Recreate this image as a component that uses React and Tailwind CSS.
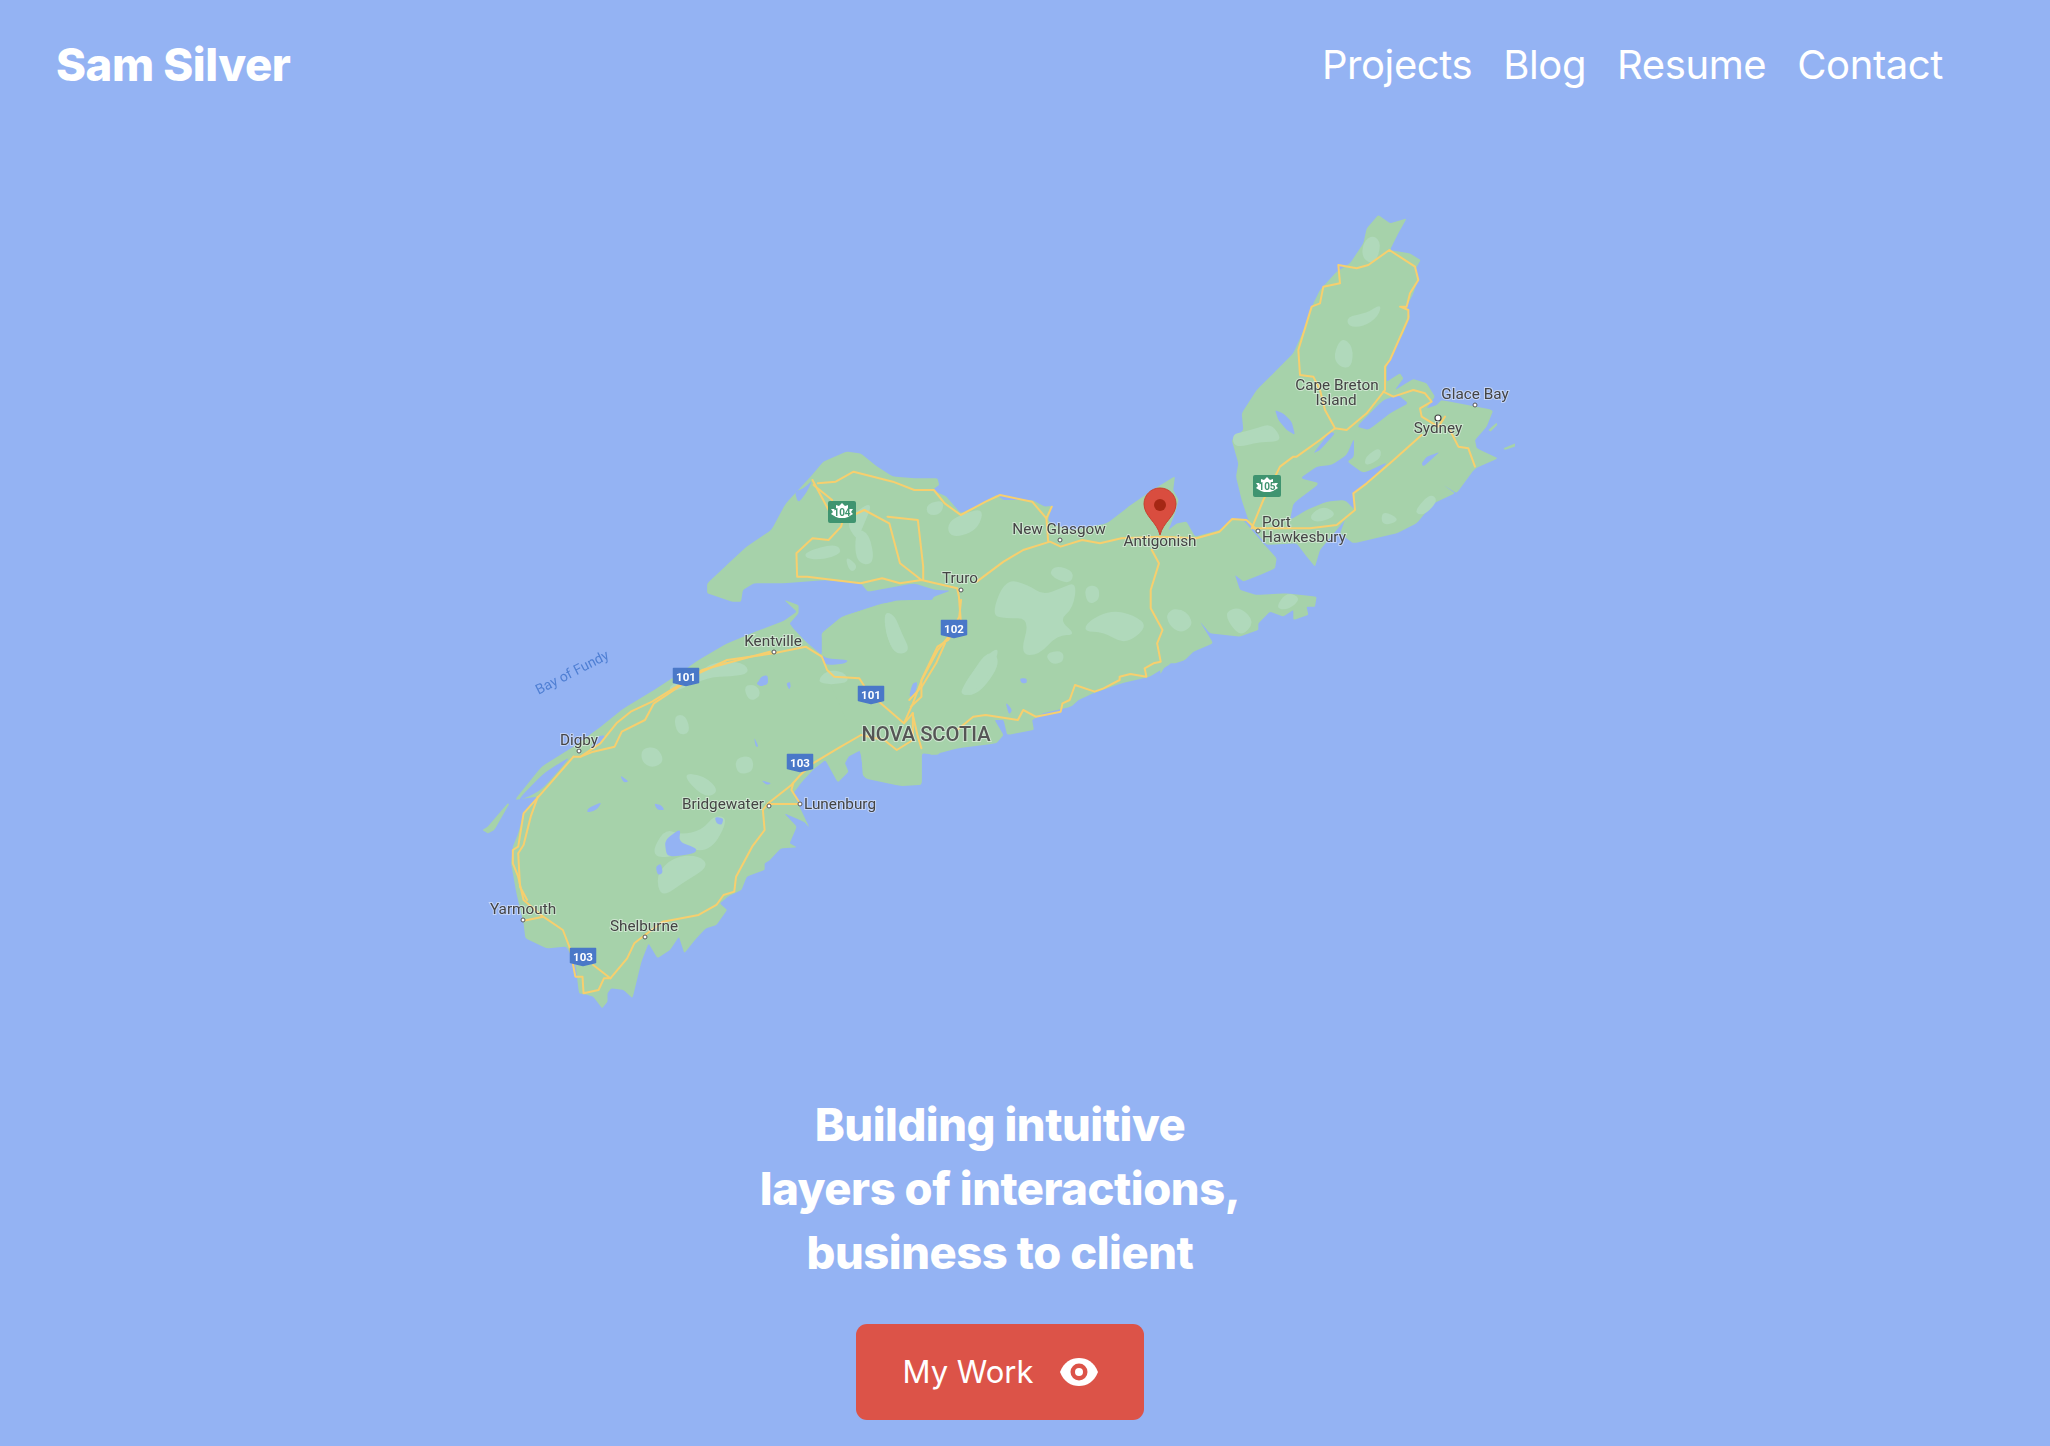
const LAND = '#a6d2aa';
const LIGHT = '#b0d9bb';
const WATER = '#94b3f3';
const ROAD = '#f7cf6e';

// each group is traced in its own local coords, then scaled onto the page
const SW = 'translate(470 600) scale(0.35714 0.33333)';
const MID = 'translate(700 420) scale(0.35714 0.33333)';
const NE = 'translate(1150 200) scale(0.33333)';
const SE = 'translate(1160 500) scale(0.33333)';

const swLand = [
  '125,600 200,500 290,440 360,385 430,325 515,270 580,225 640,180 720,130 800,95 880,62 915,35 880,0 920,15 920,40 895,70 905,85 940,125 985,165 985,100 1040,50 1130,20 1200,0 1568,0 1568,330 1520,350 1440,345 1400,350 1380,395 1340,430 1310,465 1265,460 1265,555 1200,555 1100,530 1095,450 1060,470 1050,490 1060,515 1030,548 995,480 960,510 930,545 905,580 950,682 935,665 880,640 915,680 895,730 915,742 870,745 840,780 825,790 825,810 775,830 760,870 722,890 700,910 720,930 690,975 660,985 630,1020 600,1060 585,1010 560,1050 525,1075 500,1030 480,1085 455,1195 430,1170 395,1165 385,1180 385,1205 370,1225 345,1190 330,1185 305,1180 295,1090 270,1040 215,1045 155,1015 150,970 130,880 115,790 120,740 135,700 150,640 190,590',
  '35,690 50,680 105,610 110,612 68,690 50,700',
];
const swWater = [
  '132,602 205,520 262,482 280,472 205,565 165,590',
  '355,410 380,405 360,440 335,450',
  '985,165 1000,175 1060,180 1050,190 1010,195 990,190',
  '545,720 590,685 585,725 635,745 630,760 570,770 550,765',
  '330,625 370,605 355,630 328,638',
  '685,650 710,655 705,675 690,670',
  '515,610 535,615 545,630 525,630',
  '520,800 535,790 540,820 525,825',
  '800,250 830,225 835,250 815,260',
  '420,525 445,545 430,548',
  '815,540 845,550 830,555',
  '885,250 898,245 895,270',
  '795,410 808,440 800,440',
];
const swLight = [
  '570,345 605,345 618,400 580,405',
  '480,445 525,440 545,485 510,505 480,485',
  '740,475 790,465 795,515 750,525',
  '590,520 655,525 700,575 655,595',
  '505,765 545,685 590,705 650,690 685,645 725,655 675,755 600,745 560,775',
  '520,825 570,770 640,765 670,800 600,845 535,895',
  '970,245 1000,210 1045,215 1065,245 1010,255',
  '765,255 805,255 815,290 780,305',
  '555,255 640,220 680,185 765,185 785,220 730,230 670,230 565,280',
  '1160,35 1185,45 1215,130 1195,165 1165,110',
  '1385,255 1450,145 1490,185 1425,285 1370,285',
];
const midLand = [
  '20,490 80,430 130,380 200,330 240,250 310,170 345,125 410,95 450,100 490,135 540,170 610,175 665,175 670,195 650,210 690,230 730,280 790,250 830,225 850,240 930,240 965,260 985,258 975,300 985,312 1040,330 1140,310 1200,260 1260,215 1330,168 1325,210 1340,240 1330,280 1310,335 1310,695 1320,730 1260,770 1180,790 1100,820 1060,840 1040,860 960,880 930,900 935,930 860,945 850,900 825,900 850,945 830,970 720,985 650,1005 620,990 620,1095 560,1098 460,1075 450,1000 360,780 345,680 340,640 400,590 510,550 600,540 650,540 655,530 700,512 660,510 600,490 470,515 450,490 350,480 230,490 150,490 120,510 115,545 90,545 20,520',
];
const midWater = [
  '315,180 300,215 275,250 265,215 290,205',
  '170,770 190,765 190,795 160,795',
  '245,790 255,795 250,810',
  '595,790 610,785 600,830 585,830',
  '895,775 915,775 915,790 900,790',
  '855,845 875,870 865,885',
];
const midLight = [
  '295,395 380,370 400,400 340,420 295,415',
  '405,405 445,440 420,460',
  '435,325 475,340 490,435 435,430',
  '695,305 740,280 795,265 780,325 730,350 695,345',
  '635,250 685,240 675,285 635,285',
  '855,475 920,495 960,525 1010,505 1055,485 1045,565 1005,600 1055,645 1000,645 950,705 895,705 925,595 855,595 815,585',
  '995,435 1050,455 1035,495 975,465',
  '1075,500 1115,495 1120,540 1085,555',
  '1085,605 1150,570 1215,585 1255,620 1190,675 1130,635 1075,635',
  '725,815 790,715 845,675 805,775 750,830',
  '515,575 545,585 565,640 590,695 545,705 520,640',
  '1305,590 1345,560 1385,605 1340,640',
  '490,235 450,335 440,365 405,300',
  '965,700 1015,690 1020,725 985,735',
];
const neLand = [
  '300,975 275,900 258,830 265,790 245,720 280,690 275,640 320,570 380,510 430,460 470,370 490,310 510,270 560,215 600,190 640,130 650,85 685,45 720,70 770,55 745,100 720,150 780,160 812,180 795,210 805,240 790,280 770,320 780,350 760,400 730,450 710,500 710,545 750,520 760,535 735,570 790,537 830,550 855,590 830,625 860,615 875,600 1030,630 1010,680 975,720 980,745 1045,775 975,805 920,880 880,855 915,880 850,910 800,970 740,1000 610,1030 570,1000 585,960 560,990 510,1050 495,1100 470,1070 440,1030 350,1035 325,1005',
  '1015,690 1040,668 1042,675 1022,695',
  '1060,745 1095,730 1095,740 1065,750',
];
const neWater = [
  '450,835 500,800 545,795 590,765 612,715 612,770 592,785 640,820 715,785 650,850 610,880 615,930 585,900 530,905 470,930 420,960 430,910 510,850',
  '540,695 555,700 510,750 490,760',
  '655,690 720,640 775,610 745,585 700,600 620,680',
  '375,630 400,640 425,665 435,705 410,690 385,660',
  '820,800 870,755 830,770 815,790',
];
const neLight = [
  '640,125 670,105 695,130 675,195 635,175',
  '590,350 650,340 695,310 685,350 640,380 595,380',
  '575,410 610,440 605,505 565,500 550,465',
  '245,705 280,695 320,685 365,670 400,725 330,725 255,745',
  '795,930 840,880 865,900 830,940 805,945',
  '695,930 755,960 695,980',
  '475,950 520,915 565,945 500,970',
  '645,770 690,740 695,775 645,800',
];
const seLand = [
  '0,525 0,110 50,70 80,65 105,110 180,90 210,60 250,60 275,90 310,130 350,175 345,205 300,225 250,245 225,225 240,270 290,285 380,280 470,290 465,320 440,320 445,345 400,360 400,330 370,350 330,335 295,370 295,390 240,410 150,400 120,365 160,430 100,455 75,480 45,490 20,490',
];
const seLight = [
  '15,345 50,320 105,365 70,400 35,385',
  '195,335 240,320 285,365 245,410 210,375',
  '345,325 380,275 425,295 385,330',
];

const swRoads = [
  '290,470 310,470 345,455 405,440 425,395 490,360 515,310 585,260 640,220 720,180 850,160 940,140 985,170 1000,210 1020,230 1090,235 1120,285 1150,310 1215,370 1240,340',
  '310,470 365,430 410,370 450,335 510,305 585,255 650,210 770,175 840,155',
  '290,470 200,580 150,640 135,740 120,750 120,790 135,830 150,900 205,950 260,990 280,1045 295,1130 315,1130 318,1180 360,1170 375,1135 393,1135 345,1095',
  '190,590 170,650 150,735 135,760 140,860 160,900',
  '150,962 205,950',
  '393,1135 440,1075 460,1030 490,1005 540,965 640,945 690,915 710,885 740,875 745,830 790,740 825,690 820,630 835,610 900,555 925,525 960,490 1030,445 1095,405',
  '835,612 925,612 900,570 905,550',
  '1095,405 1160,420 1195,450 1240,420 1240,340',
  '1215,370 1240,310 1265,240 1310,150 1340,110 1370,50 1375,0',
  '1230,300 1265,260 1305,190 1330,130',
];
const midRoads = [
  '590,860 620,830 620,780 665,680 695,660 730,600 725,530 720,505 620,480 560,430 530,310 460,270 400,300 395,320 360,360 315,355 270,400 272,470 300,470 450,490 510,475 560,490 620,480',
  '315,180 345,240 360,270',
  '318,195 370,240',
  '330,190 380,185 430,155 540,185 600,210 655,210 685,250 730,285 800,245 840,225 930,245 970,295 985,260',
  '970,295 975,365',
  '525,290 610,300 625,440 625,480',
  '775,485 850,425 905,390 980,365 1010,380 1070,360 1120,370 1180,355 1290,350 1390,355 1455,335 1490,297 1530,300 1555,325',
  '1265,390 1285,430 1262,510 1262,565 1295,630 1280,670 1290,725 1270,730 1245,745 1250,770 1205,762 1175,770 1175,780 1130,805 1105,815 1050,795 1035,840 1015,850 1010,875 940,890 905,870 890,900 800,885 765,890 720,930',
  '595,880 610,950 620,985',
];
const neRoads = [
  '305,985 340,900 390,800 430,770 440,770 510,720 555,685 525,630 510,570 490,530 450,525 445,450 485,320 510,310 520,260 570,250 565,195 620,205 655,195 718,150 795,200 805,240 780,280 770,320 750,320 775,330 775,355 720,480 705,500 705,570 650,640 590,690 555,685',
  '700,575 730,590 790,570 825,580 845,605 810,625 815,650 865,680 885,650',
  '815,705 720,790 650,850 610,880 615,930 560,975 480,985 340,985 310,985',
  '900,690 925,740 955,745 975,800',
];

const labels = [
  ['Kentville', 773, 646],
  ['Digby', 579, 745],
  ['Bridgewater', 723, 809],
  ['Lunenburg', 840, 809],
  ['Yarmouth', 523, 914],
  ['Shelburne', 644, 931],
  ['Truro', 960, 583],
  ['New Glasgow', 1059, 534],
  ['Antigonish', 1160, 546],
  ['Cape Breton', 1337, 390],
  ['Island', 1336, 405],
  ['Glace Bay', 1475, 399],
  ['Sydney', 1438, 433],
];

const dots = [
  [774, 652], [579, 751], [769, 806], [800, 804], [523, 920], [645, 937],
  [961, 590], [1060, 540], [1258, 531], [1475, 405],
];

const shields = [
  ['101', 686, 677],
  ['101', 871, 695],
  ['102', 954, 629],
  ['103', 800, 763],
  ['103', 583, 957],
];

// rounds off the corners of a traced outline, t is how far from the corner the curve starts
const smooth = (points, t) => {
  const p = points.split(' ').map((pair) => pair.split(',').map(Number));
  const at = (a, b, k) => [a[0] + (b[0] - a[0]) * k, a[1] + (b[1] - a[1]) * k];
  let d = '';
  p.forEach((cur, i) => {
    const prev = p[(i - 1 + p.length) % p.length];
    const next = p[(i + 1) % p.length];
    const from = at(cur, prev, t);
    const to = at(cur, next, t);
    d += `${i === 0 ? 'M' : 'L'}${from[0]} ${from[1]} Q${cur[0]} ${cur[1]} ${to[0]} ${to[1]} `;
  });
  return `${d}Z`;
};

const Polys = ({ items, fill, transform, t = 0.5 }) => (
  <g transform={transform} fill={fill}>
    {items.map((points) => (
      <path key={points} d={smooth(points, t)} />
    ))}
  </g>
);

const Roads = ({ items, transform }) => (
  <g transform={transform} fill="none" stroke={ROAD} strokeWidth="2" strokeLinejoin="round" strokeLinecap="round">
    {items.map((points) => (
      <polyline key={points} points={points} vectorEffect="non-scaling-stroke" />
    ))}
  </g>
);

const GreenShield = ({ x, y, num }) => (
  <g>
    <rect x={x - 14} y={y - 11} width="28" height="22" rx="2" fill="#3f9470" />
    <path
      d={`M${x} ${y - 9} l3 3 l3 -1 l0 4 l5 0 l-2 3 l2 2 l-5 3 l-3 1 l-6 0 l-3 -1 l-5 -3 l2 -2 l-2 -3 l5 0 l0 -4 l3 1 z`}
      fill="#ffffff"
    />
    <text x={x} y={y + 4} textAnchor="middle" fontSize="10" fontWeight="700" fill="#3f9470" fontFamily="Roboto, sans-serif">
      {num}
    </text>
  </g>
);

const NovaScotia = () => (
  <svg className="block h-[960px] w-[2000px] blur-[0.6px]" viewBox="0 130 2000 960">
    <Polys items={swLand} fill={LAND} transform={SW} t={0.12} />
    <Polys items={midLand} fill={LAND} transform={MID} t={0.12} />
    <Polys items={neLand} fill={LAND} transform={NE} t={0.12} />
    <Polys items={seLand} fill={LAND} transform={SE} t={0.12} />

    <Polys items={swLight} fill={LIGHT} transform={SW} />
    <Polys items={midLight} fill={LIGHT} transform={MID} />
    <Polys items={neLight} fill={LIGHT} transform={NE} />
    <Polys items={seLight} fill={LIGHT} transform={SE} />

    <Polys items={swWater} fill={WATER} transform={SW} t={0.35} />
    <Polys items={midWater} fill={WATER} transform={MID} t={0.35} />
    <Polys items={neWater} fill={WATER} transform={NE} t={0.2} />

    <Roads items={swRoads} transform={SW} />
    <Roads items={midRoads} transform={MID} />
    <Roads items={neRoads} transform={NE} />

    {dots.map(([cx, cy]) => (
      <circle key={`${cx}-${cy}`} cx={cx} cy={cy} r="2" fill="#ffffff" stroke="#555555" strokeWidth="1" />
    ))}
    <circle cx="1438" cy="418" r="3" fill="#ffffff" stroke="#444444" strokeWidth="1.2" />

    <g fontFamily="Roboto, sans-serif" fontSize="15.3" fill="#444444" stroke="#ffffff" strokeOpacity="0.45" strokeWidth="2" paintOrder="stroke">
      <g textAnchor="middle">
        {labels.map(([text, x, y]) => (
          <text key={text} x={x} y={y}>
            {text}
          </text>
        ))}
        <text x="926" y="741" fontSize="20.2" fontWeight="500" fill="#555555">NOVA SCOTIA</text>
      </g>
      <text x="1262" y="527">Port</text>
      <text x="1262" y="542">Hawkesbury</text>
    </g>
    <text
      x="572"
      y="677"
      textAnchor="middle"
      fontFamily="Roboto, sans-serif"
      fontSize="14"
      fill="#4f7fd3"
      transform="rotate(-27 572 672)"
    >
      Bay of Fundy
    </text>

    {shields.map(([num, x, y]) => (
      <g key={`${num}-${x}`}>
        <path d={`M${x - 12.5} ${y - 8.5} h25 v14 l-12.5 3 l-12.5 -3 z`} fill="#4a78c8" stroke="#4a78c8" strokeWidth="1.5" strokeLinejoin="round" />
        <text x={x} y={y + 4} textAnchor="middle" fontFamily="Roboto, sans-serif" fontSize="11.5" fontWeight="700" fill="#ffffff">
          {num}
        </text>
      </g>
    ))}
    <GreenShield x={842} y={512} num="104" />
    <GreenShield x={1267} y={486} num="105" />

    <path
      d="M1160 535 C1157 522 1144 516 1144 504 C1144 495 1151 488 1160 488 C1169 488 1176 495 1176 504 C1176 516 1163 522 1160 535 Z"
      fill="#d94d3f"
      stroke="#c8402f"
      strokeWidth="1"
    />
    <circle cx="1160" cy="505" r="6" fill="#a52714" />
  </svg>
);

const EyeIcon = () => (
  <svg className="h-[28px] w-[38px]" viewBox="0 0 38 28">
    <path d="M0 14 C4 4 11 0 19 0 C27 0 34 4 38 14 C34 24 27 28 19 28 C11 28 4 24 0 14 Z" fill="#ffffff" />
    <circle cx="19" cy="14" r="8.5" fill="#dc5348" />
    <circle cx="19" cy="14" r="4" fill="#ffffff" />
  </svg>
);

const App = () => {
  return (
    <div className="min-h-[1446px] bg-[#94b3f3] font-['Inter',sans-serif] text-white">
      <div className="w-[2000px]">
        <header className="flex h-[130px] items-center justify-between pl-14 pr-[57px]">
          <div className="text-[45.5px] font-[780] tracking-[-0.01em]">Sam Silver</div>
          <nav className="flex gap-[31px] text-[40px] font-normal tracking-[-0.01em]">
            <a>Projects</a>
            <a>Blog</a>
            <a>Resume</a>
            <a>Contact</a>
          </nav>
        </header>

        <NovaScotia />

        <main className="mt-[3px] flex flex-col items-center">
          <h1 className="text-center text-[45.3px] font-[780] leading-[64px] tracking-[-0.01em]">
            Building intuitive
            <br />
            layers of interactions,
            <br />
            business to client
          </h1>
          <button className="mt-[39px] flex h-[96px] w-[288px] items-center justify-center gap-[26px] rounded-[11px] bg-[#dc5348] text-[31px]">
            My Work
            <EyeIcon />
          </button>
        </main>
      </div>
    </div>
  );
};

export default App;
